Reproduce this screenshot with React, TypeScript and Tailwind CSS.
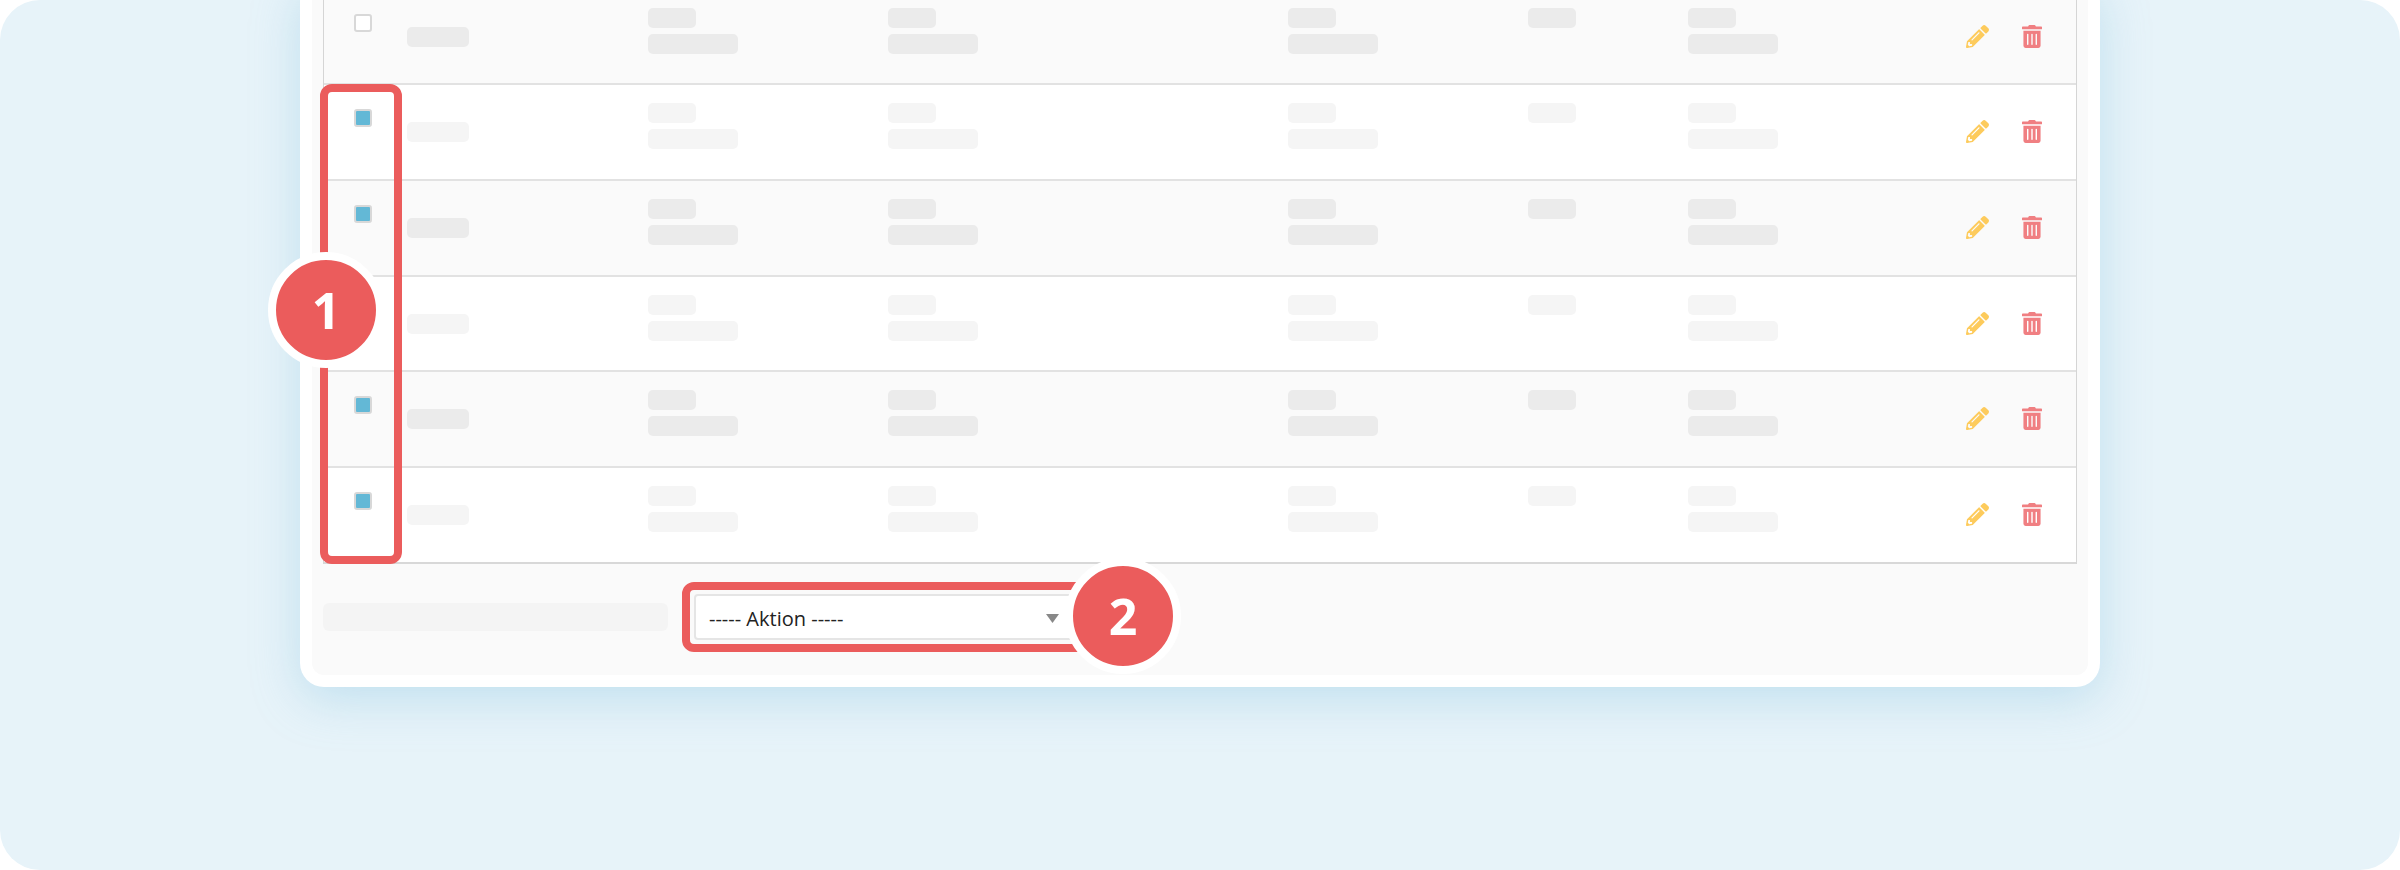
import { FaPencilAlt, FaTrashAlt } from "react-icons/fa";

const rows = [
  { odd: true, state: "empty" },
  { odd: false, state: "checked" },
  { odd: true, state: "checked" },
  { odd: false, state: "hidden" },
  { odd: true, state: "checked" },
  { odd: false, state: "checked" },
];

function Bar({ odd, wide }: { odd: boolean; wide?: boolean }) {
  return (
    <div className={`h-5 rounded-[5px] ${wide ? "w-[90px]" : "w-12"} ${odd ? "bg-[#ebebeb]" : "bg-[#f5f5f5]"}`} />
  );
}

function Stack({ odd, w, single }: { odd: boolean; w: string; single?: boolean }) {
  return (
    <div className={`${w} flex flex-col gap-[6px] pt-[18px]`}>
      <Bar odd={odd} />
      {!single && <Bar odd={odd} wide />}
    </div>
  );
}

function Row({ odd, state }: { odd: boolean; state: string }) {
  return (
    <div className={`flex h-[95.67px] border-b-2 border-[#e2e2e2] last:border-[#d8d8d8] ${odd ? "bg-[#fafafa]" : "bg-white"}`}>
      <div className="w-[83px] pl-[30px] pt-[24px]">
        <div className={`size-[18px] rounded-[3px] border-2 border-[#d8d8d8] ${state === "empty" ? "bg-white" : "bg-[#63b8d6]"}`} />
      </div>
      <div className="w-[241px] pt-[37px]">
        <div className={`h-5 w-[62px] rounded-[5px] ${odd ? "bg-[#ebebeb]" : "bg-[#f5f5f5]"}`} />
      </div>
      <Stack odd={odd} w="w-[240px]" />
      <Stack odd={odd} w="w-[400px]" />
      <Stack odd={odd} w="w-[240px]" />
      <Stack odd={odd} w="w-[160px]" single />
      <Stack odd={odd} w="w-[278px]" />
      <div className="flex flex-1 gap-[33px] pt-[35px]">
        <FaPencilAlt className="size-[23px] text-[#fdcb5c]" />
        <FaTrashAlt className="h-[23px] w-5 text-[#f07f82]" />
      </div>
    </div>
  );
}

function Badge({ n, cls }: { n: string; cls: string }) {
  return (
    <div className={`absolute flex size-[116px] items-center justify-center rounded-full border-8 border-white bg-[#eb5c5c] font-['Open_Sans',sans-serif] text-[50px] font-bold text-white ${cls}`}>
      {n}
    </div>
  );
}

export default function App() {
  return (
    <div className="relative h-[870px] w-[2400px] overflow-hidden bg-white">
      <div className="flex h-full flex-col justify-end rounded-[40px] bg-[#e7f3f9] px-[300px] pb-[183px]">
        <div className="rounded-3xl bg-white p-3 shadow-[0_12px_48px_rgba(120,190,220,0.35)]">
          <div className="rounded-xl bg-[#fafafa] px-[11px]">
            <div className="border-x border-[#d5d5d5]">
              {rows.map((r, i) => (
                <Row key={i} odd={r.odd} state={r.state} />
              ))}
            </div>
            <div className="flex h-[111.5px] items-center gap-[14px] pb-[5px]">
              <div className="h-7 w-[345px] rounded-md bg-[#f4f4f4]" />
              <div className="h-[70px] w-[418px] rounded-xl border-8 border-[#eb5c5c] p-1">
                <div className="flex h-[46px] items-center justify-between rounded border-2 border-[#e5e5e5] bg-white pl-[13px] pr-[27px] pt-[4px] font-['Open_Sans',sans-serif] text-[20px] text-[#222]">
                  <span>----- Aktion -----</span>
                  <svg width="13" height="9" viewBox="0 0 13 9">
                    <path d="M0 0h13L6.5 9z" fill="#888" />
                  </svg>
                </div>
              </div>
            </div>
          </div>
        </div>
      </div>
      <div className="absolute left-[320px] top-[84px] h-[480px] w-[82px] rounded-xl border-8 border-[#eb5c5c]" />
      <Badge n="1" cls="left-[268px] top-[252px]" />
      <Badge n="2" cls="left-[1065px] top-[558px]" />
    </div>
  );
}
